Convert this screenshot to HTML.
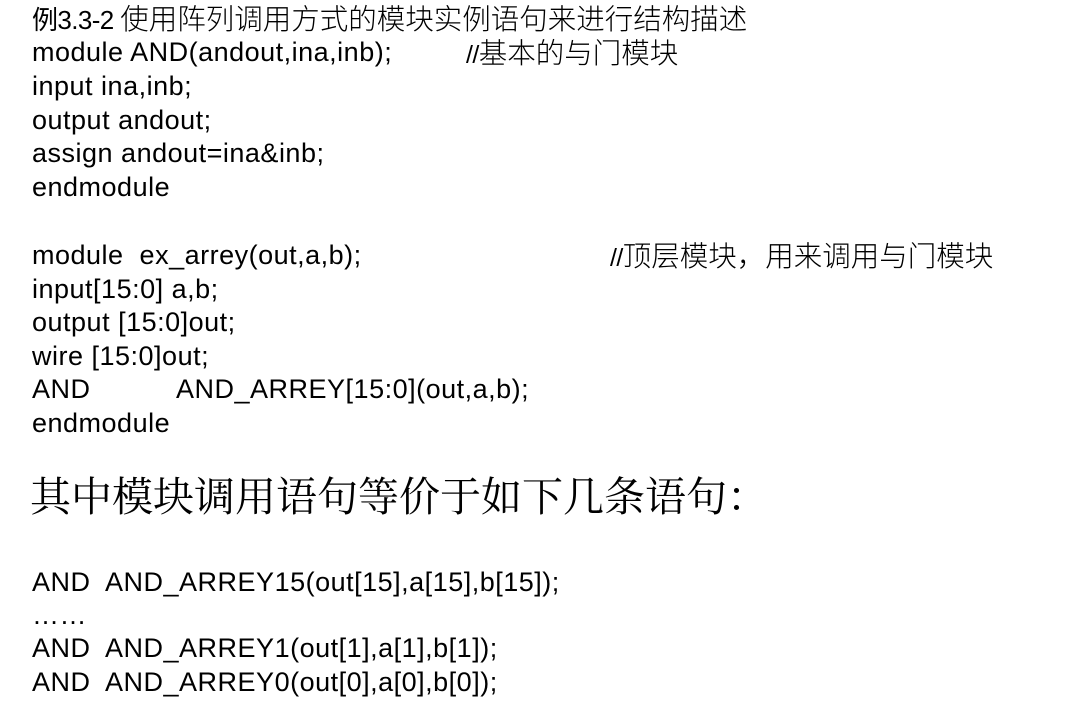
<!DOCTYPE html>
<html><head><meta charset="utf-8"><style>
body{margin:0;width:1080px;height:728px;background:#fff;overflow:hidden;position:relative;color:#000}
.l{position:absolute;left:32px;font-family:"Liberation Sans","Noto Sans CJK SC",sans-serif;font-size:27px;line-height:34px;white-space:pre;letter-spacing:0.5px}
.c{font-family:"Noto Sans CJK SC",sans-serif;font-weight:300;letter-spacing:0}
.big{position:absolute;left:30px;top:468px;font-family:"Noto Serif CJK SC",serif;font-size:41px;line-height:52px;white-space:pre}
</style></head><body>
<div class="l" style="top:1px;letter-spacing:-0.6px;font-size:26px">例3.3-2 <span class="c" style="font-size:28.5px">使用阵列调用方式的模块实例语句来进行结构描述</span></div>
<div class="l" style="top:35px">module AND(andout,ina,inb);</div>
<div class="l" style="top:35px;left:466px;letter-spacing:-0.6px;font-size:25px">//<span class="c" style="font-size:28.5px">基本的与门模块</span></div>
<div class="l" style="top:69px">input ina,inb;</div>
<div class="l" style="top:103px">output andout;</div>
<div class="l" style="top:136px">assign andout=ina&amp;inb;</div>
<div class="l" style="top:170px">endmodule</div>
<div class="l" style="top:238px">module  ex_arrey(out,a,b);</div>
<div class="l" style="top:238px;left:610px;letter-spacing:-0.6px;font-size:25px">//<span class="c" style="font-size:28.5px">顶层模块，用来调用与门模块</span></div>
<div class="l" style="top:272px">input[15:0] a,b;</div>
<div class="l" style="top:305px">output [15:0]out;</div>
<div class="l" style="top:339px">wire [15:0]out;</div>
<div class="l" style="top:372px">AND</div>
<div class="l" style="top:372px;left:176px">AND_ARREY[15:0](out,a,b);</div>
<div class="l" style="top:406px">endmodule</div>
<div class="big">其中模块调用语句等价于如下几条语句：</div>
<div class="l" style="top:565px">AND  AND_ARREY15(out[15],a[15],b[15]);</div>
<div class="l" style="top:598px">……</div>
<div class="l" style="top:631px">AND  AND_ARREY1(out[1],a[1],b[1]);</div>
<div class="l" style="top:665px">AND  AND_ARREY0(out[0],a[0],b[0]);</div>
</body></html>
